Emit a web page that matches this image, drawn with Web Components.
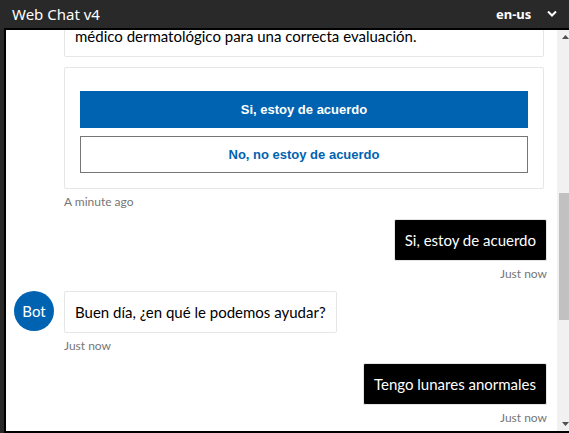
<!DOCTYPE html>
<html lang="es">
<head>
<meta charset="utf-8">
<title>Web Chat v4</title>
<style>
html, body { margin: 0; height: 100%; background: #292929; overflow: hidden; }
</style>
</head>
<body>
<web-chat>
  <chat-header slot="header" heading="Web Chat v4"></chat-header>
  <chat-message><chat-bubble wide>médico dermatológico para una correcta evaluación.</chat-bubble></chat-message>
  <chat-message time="A minute ago">
    <chat-bubble wide card>
      <card-action primary>Si, estoy de acuerdo</card-action>
      <card-action>No, no estoy de acuerdo</card-action>
    </chat-bubble>
  </chat-message>
  <chat-message from-user time="Just now"><chat-bubble dark>Si, estoy de acuerdo</chat-bubble></chat-message>
  <chat-message time="Just now"><chat-avatar slot="avatar">Bot</chat-avatar><chat-bubble>Buen día, ¿en qué le podemos ayudar?</chat-bubble></chat-message>
  <chat-message from-user time="Just now"><chat-bubble dark>Tengo lunares anormales</chat-bubble></chat-message>
</web-chat>
<script>
function define(name, html, setup) {
  const template = document.createElement('template');
  template.innerHTML = html;
  customElements.define(name, class extends HTMLElement {
    constructor() {
      super();
      this.attachShadow({ mode: 'open' }).append(template.content.cloneNode(true));
    }
    connectedCallback() { if (setup) setup(this, this.shadowRoot); }
  });
}

define('web-chat', `
<style>
  :host { display: grid; grid-template-rows: 28px minmax(0, 1fr); height: 100vh; font-family: Lato, Carlito, sans-serif; }
  main { display: flex; min-height: 0; margin-left: 4px; border: solid #000; border-width: 2px 0 2px 2px; background: #fff; }
  section { flex: 1; min-width: 0; display: flex; flex-direction: column; justify-content: flex-end; gap: 10px; padding: 0 10px 6px 8px; overflow: hidden; }
</style>
<slot name="header"></slot>
<main><section role="log"><slot></slot></section><chat-scrollbar></chat-scrollbar></main>`);

define('chat-header', `
<style>
  :host { display: flex; align-items: center; justify-content: space-between; padding: 0 12px; color: #fff; font-family: "Noto Sans", "Open Sans", sans-serif; }
  h1 { margin: 0; font-size: 15px; line-height: 28px; font-weight: 400; }
  label { display: flex; align-items: center; gap: 15px; }
  select { appearance: none; border: 0; padding: 0; background: none; color: inherit; font: 700 13px/28px "Noto Sans", "Open Sans", sans-serif; }
  option { color: #000; }
  svg { display: block; }
</style>
<h1></h1>
<label><select aria-label="Language"><option>en-us</option></select>
<svg width="10" height="8" viewBox="0 0 10 8" fill="none" stroke="#fff" stroke-width="2"><path d="M1 1.5 5 5.5 9 1.5"/></svg></label>`,
(el, root) => { root.querySelector('h1').textContent = el.getAttribute('heading'); });

define('chat-message', `
<style>
  :host { display: grid; grid-template-columns: 40px minmax(0, 1fr); column-gap: 10px; flex: none; }
  .body { grid-column: 2; grid-row: 1; display: flex; flex-direction: column; align-items: flex-start; }
  :host([from-user]) .body { align-items: flex-end; }
  time { padding-top: 5px; font-size: 12px; line-height: 15px; color: #767676; }
  time:empty { display: none; }
</style>
<slot name="avatar"></slot>
<div class="body"><slot></slot><time></time></div>`,
(el, root) => { root.querySelector('time').textContent = el.getAttribute('time') || ''; });

define('chat-avatar', `
<style>
  :host { display: flex; align-items: center; justify-content: center; width: 40px; height: 40px; border-radius: 50%; background: #0063b1; color: #fff; font-size: 15px; }
</style>
<slot></slot>`);

define('chat-bubble', `
<style>
  :host { display: block; box-sizing: border-box; max-width: 480px; padding: 10px; border: 1px solid #e6e6e6; border-radius: 2px; background: #fff; color: #000; font-size: 15px; line-height: 20px; }
  :host([wide]) { width: 100%; }
  :host([dark]) { background: #000; color: #fff; }
  :host([card]) { display: flex; flex-direction: column; gap: 8px; padding: 23px 15px 15px; }
</style>
<slot></slot>`);

define('card-action', `
<style>
  :host { display: block; }
  button { box-sizing: border-box; display: block; width: 100%; height: 37px; margin: 0; padding: 0; border: 1px solid #767676; background: #fff; color: #0063b1; font: 700 13px/16px "Liberation Sans", Arial, sans-serif; }
  :host([primary]) button { background: #0063b1; border-color: #0063b1; color: #fff; }
</style>
<button type="button"><slot></slot></button>`);

define('chat-scrollbar', `
<style>
  :host { display: grid; grid-template-rows: 17px 146fr 127fr 94fr 17px; width: 12px; overflow: hidden; background: #f1f1f1; }
  .thumb { grid-row: 3; margin-left: 2px; background: #c1c1c1; }
  svg { display: block; width: 17px; height: 17px; fill: #505050; }
  .down { grid-row: 5; }
</style>
<svg viewBox="0 0 17 17"><path d="M5 9h7L8.500 5Z"/></svg>
<div class="thumb"></div>
<svg class="down" viewBox="0 0 17 17"><path d="M5 8h7L8.500 12Z"/></svg>`);
</script>
</body>
</html>
